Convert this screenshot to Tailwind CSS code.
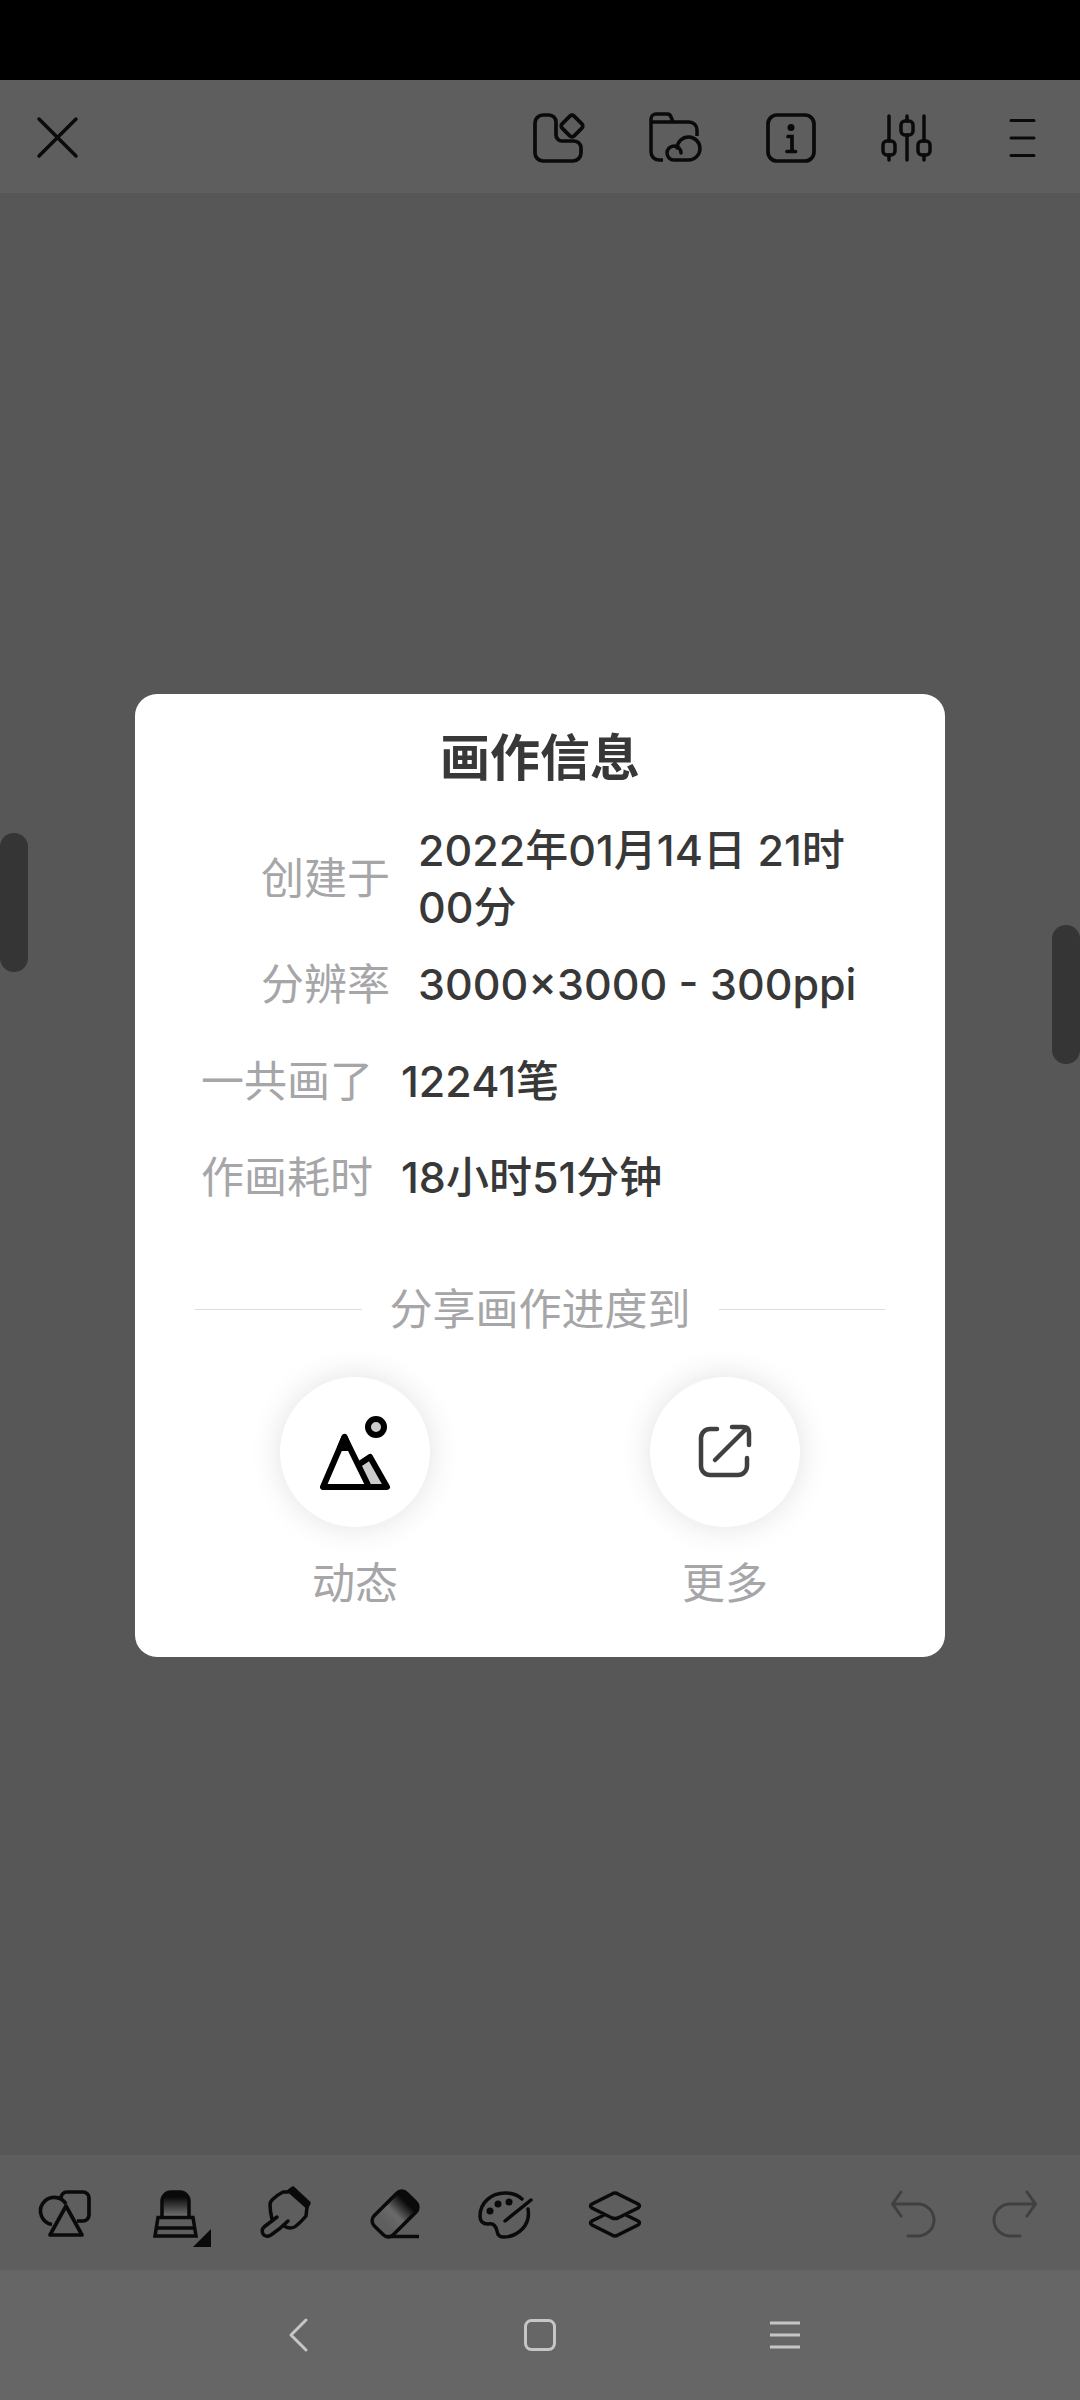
<!DOCTYPE html>
<html lang="zh-CN">
<head>
<meta charset="utf-8">
<meta name="viewport" content="width=device-width, initial-scale=1">
<title>画作信息</title>
<script src="https://cdn.jsdelivr.net/npm/@tailwindcss/browser@4"></script>
</head>
<body class="flex min-h-screen flex-col bg-[#666666] font-['Inter','Noto_Sans_CJK_SC',sans-serif]">
  <div class="h-20 bg-black"></div>

  <div class="relative flex grow flex-col text-[#0a0a0a]">
    <header class="flex h-[113px] items-center justify-between bg-[#5e5e5e]">
      <button type="button" aria-label="关闭" class="flex h-full w-[116px] items-center justify-center">
        <svg class="size-[60px]" viewBox="0 0 60 60" fill="none" stroke="currentColor" stroke-width="3.500" stroke-linecap="round"><path d="M11 12l37 37M48 12L11 49"/></svg>
      </button>
      <nav class="flex h-full">
        <button type="button" aria-label="素材" class="flex w-[116px] items-center justify-center">
          <svg class="size-[60px]" viewBox="-1 0 60 60" fill="none" stroke="currentColor" stroke-width="3.700"><path d="M14 8h6a7 7 0 0 1 7 7v13a6 6 0 0 0 6 6h12a7 7 0 0 1 7 7v5a8 8 0 0 1-8 8H14a8 8 0 0 1-8-8V16a8 8 0 0 1 8-8z"/><rect x="34.500" y="10.500" width="17" height="17" rx="3" transform="rotate(45 43 19)"/></svg>
        </button>
        <button type="button" aria-label="云文件" class="flex w-[116px] items-center justify-center">
          <svg class="size-[60px]" viewBox="-1 0 60 60" fill="none" stroke="currentColor" stroke-width="3.500"><path d="M6 15v-3a5 5 0 0 1 5-5h11a4 4 0 0 1 4 3l2 5M6 15h38a8 8 0 0 1 8 8v6M6 15v30a8 8 0 0 0 8 8h4"/><path stroke-linecap="round" d="M32 41a11.500 11.500 0 1 1 11 12H29a7 7 0 1 1 7-7"/></svg>
        </button>
        <button type="button" aria-label="画作信息" class="flex w-[116px] items-center justify-center">
          <svg class="size-[60px]" viewBox="-1 0 60 60" fill="none" stroke="currentColor" stroke-width="3.700"><rect x="7" y="8" width="46" height="46" rx="9"/><circle cx="30" cy="20.500" r="3.500" fill="currentColor" stroke="none"/><path d="M27 29.500h4v15M26 44.500h8.500" stroke-linecap="round"/></svg>
        </button>
        <button type="button" aria-label="设置" class="flex w-[116px] items-center justify-center">
          <svg class="size-[60px]" viewBox="-1 0 60 60" fill="none" stroke="currentColor" stroke-width="3.500" stroke-linecap="round"><path d="M12 9v25M12 48v5M30 9v5M30 28v25M47 9v25M47 48v5"/><rect x="6" y="34" width="12" height="14" rx="4"/><rect x="24" y="14" width="12" height="14" rx="4"/><rect x="41" y="34" width="12" height="14" rx="4"/></svg>
        </button>
        <button type="button" aria-label="菜单" class="flex w-[116px] items-center justify-center">
          <svg class="size-[60px]" viewBox="0 0 60 60" fill="none" stroke="currentColor" stroke-width="3" stroke-linecap="round"><path d="M19 13.500h23M19 31h23M19 48.500h23"/></svg>
        </button>
      </nav>
    </header>

    <main class="relative grow bg-[#575757]">
      <div class="absolute left-0 top-[640px] h-[139px] w-7 rounded-full bg-[#353535]"></div>
      <div class="absolute right-0 top-[732px] h-[139px] w-7 rounded-full bg-[#353535]"></div>
    </main>

    <footer class="flex h-[115px] items-center justify-between bg-[#5e5e5e] pl-[10px] pr-[14px]">
      <div class="flex h-full">
        <button type="button" aria-label="图形" class="flex w-[110px] items-center justify-center">
          <svg class="size-[60px]" viewBox="0 1 60 60" fill="none" stroke="currentColor" stroke-width="3.700" stroke-linejoin="round"><path d="M31 22A13.700 13.700 0 1 0 17 42.500M26 17v-1a6 6 0 0 1 6-6h16a6 6 0 0 1 6 6v17a6 6 0 0 1-6 6h-6"/><path d="M31 24L15 53h32z"/></svg>
        </button>
        <button type="button" aria-label="画笔" class="flex w-[110px] items-center justify-center">
          <svg class="size-[60px] overflow-visible" viewBox="0 1 60 60" fill="none" stroke="currentColor" stroke-width="3.500">
            <defs><linearGradient id="brush" x1="0" y1="0" x2="0" y2="1"><stop offset=".2" stop-color="#0a0a0a"/><stop offset="1" stop-color="#757575"/></linearGradient></defs>
            <path d="M17 35V19a9 9 0 0 1 9-9h9a9 9 0 0 1 9 9v16" fill="url(#brush)"/><path d="M13 35.500h35L51 54H10zM11 46h38"/><path d="M48 65l18-18v18z" fill="currentColor" stroke="none"/>
          </svg>
        </button>
        <button type="button" aria-label="涂抹" class="flex w-[110px] items-center justify-center">
          <svg class="size-[60px]" viewBox="0 1 60 60" fill="none" stroke="currentColor" stroke-width="3.500" stroke-linecap="round" stroke-linejoin="round"><path d="M34 9l4-3 16 15-2 4z" fill="currentColor"/><path d="M33 10l-5 0q-6 3-11 8-2 2-2 5 0 6 2 14M22 35L9 45q-3 3-1 7 3 4 8 1 9-6 17-14M29 44q7 4 12 0 5-4 10-10l1-9"/></svg>
        </button>
        <button type="button" aria-label="橡皮擦" class="flex w-[110px] items-center justify-center">
          <svg class="size-[60px]" viewBox="0 1 60 60" fill="none" stroke="currentColor" stroke-width="3.500">
            <defs><linearGradient id="eraser" x1="0" y1="0" x2="1" y2="0"><stop offset=".2" stop-color="#6a6a6a" stop-opacity="0"/><stop offset=".5" stop-color="#6a6a6a"/><stop offset=".85" stop-color="#0a0a0a"/></linearGradient></defs>
            <rect x="7" y="18.500" width="46" height="27" rx="7" transform="rotate(-45 30 32)" fill="url(#eraser)"/><path d="M22 54.500h32"/>
          </svg>
        </button>
        <button type="button" aria-label="颜色" class="flex w-[110px] items-center justify-center">
          <svg class="size-[60px]" viewBox="1 1 60 60" fill="none" stroke="currentColor" stroke-width="3.500" stroke-linecap="round"><path d="M48 17C43 12 37 11 31 11 17 11 6 21 6 34q0 8 8 8c5-1 8 2 9 7q1 6 6 6C44 55 57 43 54 27"/><path d="M57 18L31 39"/><g fill="currentColor" stroke="none"><circle cx="16" cy="29" r="3.500"/><circle cx="24" cy="22" r="3.500"/><circle cx="35" cy="20" r="3.500"/></g></svg>
        </button>
        <button type="button" aria-label="图层" class="flex w-[110px] items-center justify-center">
          <svg class="size-[60px]" viewBox="1 1 60 60" fill="none" stroke="currentColor" stroke-width="3.500"><path d="M28 12q3-2 6 0l20 10q3 2 0 4L34 36q-3 1-6 0L8 26q-3-2 0-4zM20 33L8 39q-3 2 0 4l20 10q3 2 6 0l20-10q3-2 0-4L42 33"/></svg>
        </button>
      </div>
      <div class="flex h-full text-[#404040]">
        <button type="button" aria-label="撤销" class="flex w-[102px] items-center justify-center">
          <svg class="size-[60px]" viewBox="0 1 60 60" fill="none" stroke="currentColor" stroke-width="3" stroke-linecap="round" stroke-linejoin="round"><path d="M18 10L9.500 22 18 34M9.500 22H35a16 16 0 0 1 0 32H25"/></svg>
        </button>
        <button type="button" aria-label="重做" class="flex w-[102px] items-center justify-center">
          <svg class="size-[60px]" viewBox="0 1 60 60" fill="none" stroke="currentColor" stroke-width="3" stroke-linecap="round" stroke-linejoin="round"><path d="M42 10l8.500 12L42 34M50.500 22H25a16 16 0 0 0 0 32h10"/></svg>
        </button>
      </div>
    </footer>

    <div class="absolute inset-0 flex items-center justify-center">
      <section role="dialog" aria-labelledby="dialog-title" class="w-3/4 rounded-[22px] bg-white pb-[45px] pt-8 text-[43px] leading-[57px] text-[#a6a6a8]">
        <h1 id="dialog-title" class="text-center text-[50px] font-bold leading-[64px] text-[#383838]">画作信息</h1>

        <dl class="mt-8 grid grid-cols-[255px_1fr] items-center gap-x-7 gap-y-5 pr-[60px]">
          <dt class="text-right">创建于</dt>
          <dd class="font-medium text-[#383838]">2022年01月14日 21时00分</dd>
          <dt class="text-right">分辨率</dt>
          <dd class="font-medium text-[#383838]">3000×3000 - 300ppi</dd>
        </dl>
        <dl class="mt-10 grid grid-cols-[auto_1fr] gap-x-7 gap-y-[39px] px-[66px]">
          <dt>一共画了</dt>
          <dd class="font-medium text-[#383838]">12241笔</dd>
          <dt>作画耗时</dt>
          <dd class="font-medium text-[#383838]">18小时51分钟</dd>
        </dl>

        <div class="mt-[75px] flex items-center gap-7 px-[60px]">
          <div class="h-px grow bg-[#dedede]"></div>
          <h2>分享画作进度到</h2>
          <div class="h-px grow bg-[#dedede]"></div>
        </div>

        <div class="mt-[39px] grid grid-cols-2 px-[35px]">
          <button type="button" class="flex flex-col items-center gap-7">
            <span class="flex size-[150px] items-center justify-center rounded-full bg-white shadow-[0_0_32px_rgba(0,0,0,0.12)]">
              <svg class="size-20" viewBox="0 0 80 80" fill="none" stroke="#000" stroke-width="6" stroke-linejoin="round"><circle cx="61" cy="15" r="8" fill="#ccc"/><path d="M43 53l12-8 17 30H52z" fill="#ccc"/><path d="M29.500 25L8 75h46z" fill="#fff"/><path d="M29.500 25l-4.500 11h9z" fill="#000"/></svg>
            </span>
            <span>动态</span>
          </button>
          <button type="button" class="flex flex-col items-center gap-7">
            <span class="flex size-[150px] items-center justify-center rounded-full bg-white shadow-[0_0_32px_rgba(0,0,0,0.12)]">
              <svg class="size-[60px]" viewBox="0 0 60 60" fill="none" stroke="#404040" stroke-width="4.500" stroke-linecap="round"><path d="M22 7h-7a9 9 0 0 0-9 9v28a9 9 0 0 0 9 9h28a9 9 0 0 0 9-9v-8M20 38L52 6M37 5h11q6 0 6 6v12"/></svg>
            </span>
            <span>更多</span>
          </button>
        </div>
      </section>
    </div>
  </div>

  <nav class="flex h-[130px] items-center justify-center text-[#c6c6c6]">
    <button type="button" aria-label="返回" class="flex h-full w-[243px] items-center justify-center"><svg class="size-10" viewBox="0 0 40 40" fill="none" stroke="currentColor" stroke-width="3" stroke-linecap="round" stroke-linejoin="round"><path d="M29 5L14 20l15 15"/></svg></button>
    <button type="button" aria-label="主页" class="flex h-full w-[243px] items-center justify-center"><svg class="size-10" viewBox="0 0 40 40" fill="none" stroke="currentColor" stroke-width="3"><rect x="5.500" y="5.500" width="29" height="29" rx="6"/></svg></button>
    <button type="button" aria-label="最近任务" class="flex h-full w-[243px] items-center justify-center"><svg class="size-10" viewBox="0 0 40 40" fill="none" stroke="currentColor" stroke-width="3"><path d="M7 8h30M7 20h30M7 32h30"/></svg></button>
  </nav>
</body>
</html>
